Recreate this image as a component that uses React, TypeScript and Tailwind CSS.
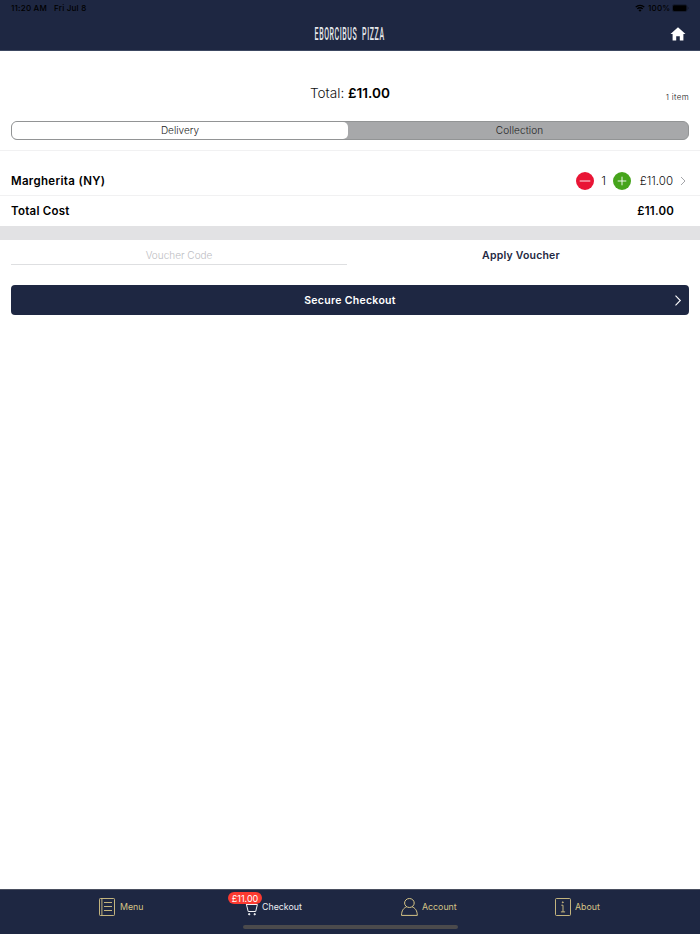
import { ReactNode } from "react";

interface TabProps {
  label: string;
  className: string;
  labelClassName?: string;
  children: ReactNode;
}

function StatusBar() {
  return (
    <div className="flex h-4 items-center justify-between pl-[11px] pr-[11px] font-['Inter',sans-serif] text-[8px] font-medium text-black">
      <div className="flex gap-[7px] tracking-[0.22px]">
        <span>11:20 AM</span>
        <span>Fri Jul 8</span>
      </div>
      <div className="flex items-center">
        <svg width="10" height="8" viewBox="0 0 10 8" fill="none" stroke="currentColor" strokeWidth="1.3">
          <path d="M0.7 3.1a6.1 6.1 0 0 1 8.6 0" />
          <path d="M2.3 4.9a3.8 3.8 0 0 1 5.4 0" />
          <path d="M5 7.7 3.5 6.2a2.1 2.1 0 0 1 3 0Z" fill="currentColor" stroke="none" />
        </svg>
        <span className="ml-[3px] w-[22px] tracking-[0.2px]">100%</span>
        <svg className="ml-[2px]" width="17" height="8" viewBox="0 0 17 8">
          <rect x="0.4" y="0.7" width="14.6" height="6.8" rx="1.8" fill="none" stroke="#111624" strokeWidth="0.6" />
          <rect x="1" y="1.3" width="13.4" height="5.6" rx="1.2" />
          <path d="M15.8 3v2.2q.9-.3.9-1.1T15.8 3Z" fill="#111624" />
        </svg>
      </div>
    </div>
  );
}

function Header() {
  return (
    <header className="h-[51px] border-b border-[#3c4761] bg-[#1e2742]">
      <StatusBar />
      <div className="grid h-[34px] grid-cols-3 items-center pr-[14px] pt-px">
        <span />
        <h1 className="flex justify-center pl-[14px] pt-[2px]">
          <span className="scale-x-[0.4] whitespace-nowrap font-['Roboto',sans-serif] text-[17.5px] font-medium leading-none tracking-[1.5px] text-[#e6e8ec] [word-spacing:6px]">
            EBORCIBUS PIZZA
          </span>
        </h1>
        <svg className="justify-self-end" width="16" height="14" viewBox="0 0 16 14" fill="#fff">
          <path d="M8 0.2 15.5 7h-2.1v6.6H9.8V9.2H6.2v4.4H2.6V7H0.5Z" />
        </svg>
      </div>
    </header>
  );
}

function Tab({ label, className, labelClassName = "text-[#d6c486]", children }: TabProps) {
  return (
    <div className={`flex items-center ${className}`}>
      {children}
      <span className={`pt-px text-[8.8px] leading-none ${labelClassName}`}>{label}</span>
    </div>
  );
}

function TabBar() {
  return (
    <footer className="flex h-[45px] flex-col border-t border-[#4a4f60] bg-[#1e2742] font-['Inter',sans-serif]">
      <nav className="flex h-[34px] items-center">
        <Tab label="Menu" className="ml-[99px] w-[145px] gap-[5px]">
          <svg width="16" height="18" viewBox="0 0 16 18" fill="none" stroke="#d6c486" strokeWidth="0.9">
            <rect x="0.5" y="0.5" width="15" height="17" rx="0.8" />
            <path d="M2.9 0.5v17M5 4.5h8M5 8.5h8M5 12.5h8" />
          </svg>
        </Tab>
        <Tab label="Checkout" className="w-[157px] gap-[4px]" labelClassName="text-[#eceef2]">
          <div className="relative h-[18px] w-[14px]">
            <svg width="14" height="18" viewBox="0 0 14 18" fill="none" stroke="#f2f3f6" strokeWidth="1">
              <path d="M0 3.5h1.7L4.2 13.5h7.5L13.4 6.5H2.4" />
              <circle cx="5.2" cy="16.2" r="0.7" fill="#f2f3f6" />
              <circle cx="10.7" cy="16.2" r="0.7" fill="#f2f3f6" />
            </svg>
            <span className="absolute -left-4 -top-[6px] flex h-[12px] w-[34px] items-center justify-center rounded-full bg-[#fb3a31] text-[9px] leading-none text-white">
              £11.00
            </span>
          </div>
        </Tab>
        <Tab label="Account" className="w-[154px] gap-[4px]">
          <svg width="17" height="18" viewBox="0 0 17 18" fill="none" stroke="#d6c486" strokeWidth="1">
            <ellipse cx="8.4" cy="5" rx="4.8" ry="4.5" />
            <path d="M5.8 8.7C2.6 10 .6 12.5.5 17.4h15.8C16.2 12.5 14.2 10 11 8.7" />
          </svg>
        </Tab>
        <Tab label="About" className="gap-[4px]">
          <svg width="16" height="18" viewBox="0 0 16 18" fill="none" stroke="#d6c486" strokeWidth="0.9">
            <rect x="0.5" y="0.5" width="15" height="17" rx="1" />
            <path d="M6.3 7.2H8v6.6M5.9 13.9h4.2" />
            <circle cx="7.8" cy="4.3" r="0.5" fill="#d6c486" />
          </svg>
        </Tab>
      </nav>
      <div className="mx-auto mt-px h-[4px] w-[215px] rounded-full bg-[#4b4a4c]" />
    </footer>
  );
}

export default function App() {
  return (
    <div className="flex h-screen flex-col overflow-hidden bg-white font-['Inter',sans-serif] text-[#111]">
      <Header />

      <main className="flex-1">
        {/* Basket summary */}
        <section className="h-[100px] border-b border-[#f1f1f2] px-[11px] pt-[32px]">
          <div className="grid h-[22px] grid-cols-3 items-center">
            <span />
            <p className="whitespace-nowrap text-center text-[13.6px] font-light leading-none">
              Total: <span className="font-semibold text-black">£11.00</span>
            </p>
            <p className="mt-[5px] text-right text-[8px] font-light leading-none tracking-[0.35px]">1 item</p>
          </div>
          <div className="mt-[16px] flex h-[19px] rounded-[6px] border border-[#929495] bg-[#a7a8aa] text-[10px] font-light leading-none text-[#222]">
            <button className="w-[336px] rounded-[5px] bg-white pb-px">Delivery</button>
            <button className="flex-1 pb-px pl-[3px] tracking-[0.1px]">Collection</button>
          </div>
        </section>

        {/* Order lines */}
        <section className="flex h-[45px] items-center border-b border-[#f1f1f2] pl-[11px] pr-[14px] pt-[15px]">
          <h2 className="flex-1 pt-[2px] text-[11.5px] font-semibold leading-none tracking-[0.32px] text-black">Margherita (NY)</h2>
          <button aria-label="Remove one">
            <svg width="18" height="18" viewBox="0 0 18 18" stroke="#fff" strokeWidth="0.9">
              <circle cx="9" cy="9" r="9" fill="#e91535" stroke="none" />
              <path d="M3.7 9h10.6" />
            </svg>
          </button>
          <span className="w-[19px] text-center text-[12px] font-light leading-none">1</span>
          <button aria-label="Add one">
            <svg width="18" height="18" viewBox="0 0 18 18" stroke="#fff" strokeWidth="0.9">
              <circle cx="9" cy="9" r="9" fill="#46a41c" stroke="none" />
              <path d="M4.7 9h8.6M9 4.7v8.6" />
            </svg>
          </button>
          <span className="w-[42px] pt-[2px] text-right text-[11.5px] font-light leading-none">£11.00</span>
          <svg className="ml-[7px]" width="6" height="10" viewBox="0 0 6 10" fill="none" stroke="#a5a6aa">
            <path d="M1 1l4 4-4 4" />
          </svg>
        </section>
        <section className="flex h-[30px] items-center justify-between pl-[11px] pr-[26px] pt-[2px] text-[11.5px] font-semibold leading-none text-black">
          <span className="tracking-[0.25px]">Total Cost</span>
          <span className="tracking-[0.2px]">£11.00</span>
        </section>
        <div className="h-[14px] bg-[#e2e2e4]" />

        {/* Voucher */}
        <section className="flex h-[25px] pl-[11px] pr-[11px]">
          <input
            className="w-[336px] border-b border-[#dedfe1] pt-[5px] text-center text-[10px] font-light leading-none outline-none placeholder:text-[#bcbdc2]"
            placeholder="Voucher Code"
          />
          <button className="flex-1 pl-[6px] pt-[7px] text-[10.5px] font-semibold leading-none tracking-[0.2px] text-[#1e2742]">
            Apply Voucher
          </button>
        </section>

        <div className="px-[11px] pt-[20px]">
          <button className="grid h-[30px] w-full grid-cols-[1fr_auto_1fr] items-center rounded-[4px] bg-[#1e2742] pl-[7px] pr-[7px] text-[10.5px] font-semibold leading-none text-white">
            <span />
            <span className="pt-[2px] tracking-[0.3px]">Secure Checkout</span>
            <svg className="justify-self-end" width="8" height="11" viewBox="0 0 8 11" fill="none" stroke="#fff" strokeWidth="1.1">
              <path d="M1.5 0.7 6.3 5.5 1.5 10.3" />
            </svg>
          </button>
        </div>
      </main>

      <TabBar />
    </div>
  );
}
